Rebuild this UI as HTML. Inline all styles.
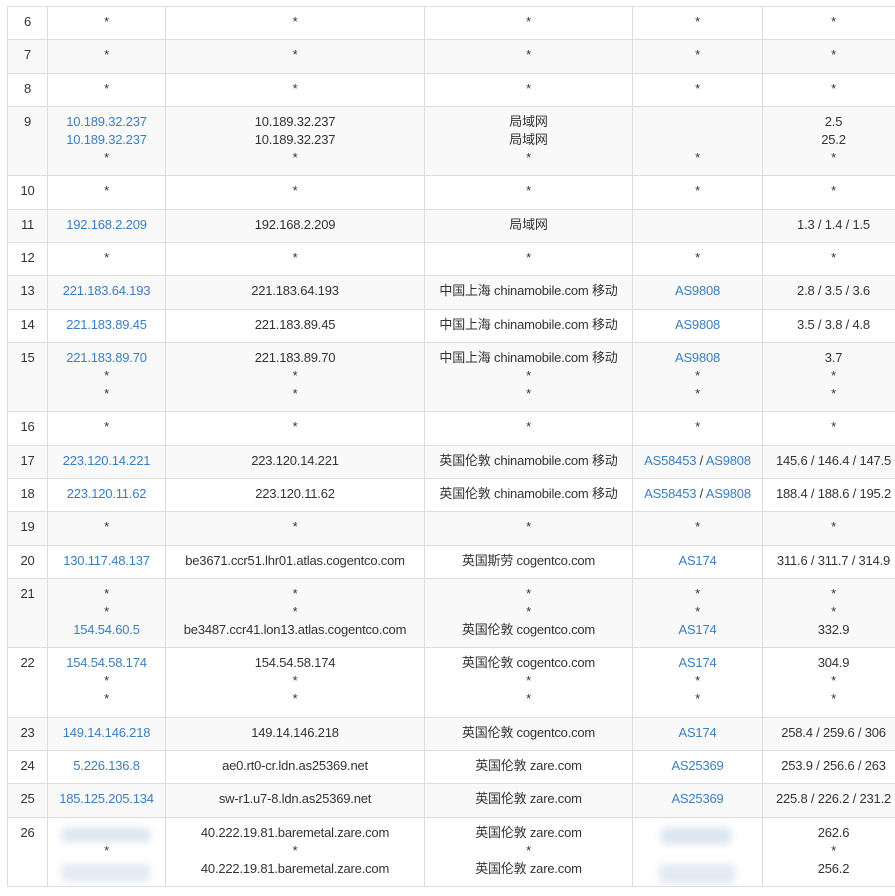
<!DOCTYPE html>
<html><head><meta charset="utf-8"><style>
body{margin:0;background:#fff;overflow:hidden;width:895px;height:896px}
table{position:absolute;left:7px;top:6px;border-collapse:collapse;table-layout:fixed;width:897px;font-family:"Liberation Sans","Noto Sans CJK SC",sans-serif;font-size:13px;letter-spacing:-0.2px;color:#333}
td{border:1px solid #ddd;text-align:center;vertical-align:top;line-height:18px;padding:6px 0 8.33px;white-space:nowrap;overflow:hidden}
tr:nth-child(even) td{background:#f9f9f9}
a{color:#3a7ec2;text-decoration:none}
.b{position:relative}
.bl{position:absolute;background:#dbe5f1;filter:blur(4px)}
</style></head><body>
<table>
<colgroup><col style="width:40px"><col style="width:118px"><col style="width:259px"><col style="width:208px"><col style="width:130px"><col style="width:142px"></colgroup>
<tr><td>6</td><td>*</td><td>*</td><td>*</td><td>*</td><td>*</td></tr>
<tr><td>7</td><td>*</td><td>*</td><td>*</td><td>*</td><td>*</td></tr>
<tr><td>8</td><td>*</td><td>*</td><td>*</td><td>*</td><td>*</td></tr>
<tr><td>9</td><td><a>10.189.32.237</a><br><a>10.189.32.237</a><br>*</td><td>10.189.32.237<br>10.189.32.237<br>*</td><td>局域网<br>局域网<br>*</td><td><br><br>*</td><td>2.5<br>25.2<br>*</td></tr>
<tr><td>10</td><td>*</td><td>*</td><td>*</td><td>*</td><td>*</td></tr>
<tr><td>11</td><td><a>192.168.2.209</a></td><td>192.168.2.209</td><td>局域网</td><td></td><td>1.3 / 1.4 / 1.5</td></tr>
<tr><td>12</td><td>*</td><td>*</td><td>*</td><td>*</td><td>*</td></tr>
<tr><td>13</td><td><a>221.183.64.193</a></td><td>221.183.64.193</td><td>中国上海 chinamobile.com 移动</td><td><a>AS9808</a></td><td>2.8 / 3.5 / 3.6</td></tr>
<tr><td>14</td><td><a>221.183.89.45</a></td><td>221.183.89.45</td><td>中国上海 chinamobile.com 移动</td><td><a>AS9808</a></td><td>3.5 / 3.8 / 4.8</td></tr>
<tr><td>15</td><td><a>221.183.89.70</a><br>*<br>*</td><td>221.183.89.70<br>*<br>*</td><td>中国上海 chinamobile.com 移动<br>*<br>*</td><td><a>AS9808</a><br>*<br>*</td><td>3.7<br>*<br>*</td></tr>
<tr><td>16</td><td>*</td><td>*</td><td>*</td><td>*</td><td>*</td></tr>
<tr><td>17</td><td><a>223.120.14.221</a></td><td>223.120.14.221</td><td>英国伦敦 chinamobile.com 移动</td><td><a>AS58453</a> / <a>AS9808</a></td><td>145.6 / 146.4 / 147.5</td></tr>
<tr><td>18</td><td><a>223.120.11.62</a></td><td>223.120.11.62</td><td>英国伦敦 chinamobile.com 移动</td><td><a>AS58453</a> / <a>AS9808</a></td><td>188.4 / 188.6 / 195.2</td></tr>
<tr><td>19</td><td>*</td><td>*</td><td>*</td><td>*</td><td>*</td></tr>
<tr><td>20</td><td><a>130.117.48.137</a></td><td>be3671.ccr51.lhr01.atlas.cogentco.com</td><td>英国斯劳 cogentco.com</td><td><a>AS174</a></td><td>311.6 / 311.7 / 314.9</td></tr>
<tr><td>21</td><td>*<br>*<br><a>154.54.60.5</a></td><td>*<br>*<br>be3487.ccr41.lon13.atlas.cogentco.com</td><td>*<br>*<br>英国伦敦 cogentco.com</td><td>*<br>*<br><a>AS174</a></td><td>*<br>*<br>332.9</td></tr>
<tr><td>22</td><td><a>154.54.58.174</a><br>*<br>*</td><td>154.54.58.174<br>*<br>*</td><td>英国伦敦 cogentco.com<br>*<br>*</td><td><a>AS174</a><br>*<br>*</td><td>304.9<br>*<br>*</td></tr>
<tr><td>23</td><td><a>149.14.146.218</a></td><td>149.14.146.218</td><td>英国伦敦 cogentco.com</td><td><a>AS174</a></td><td>258.4 / 259.6 / 306</td></tr>
<tr><td>24</td><td><a>5.226.136.8</a></td><td>ae0.rt0-cr.ldn.as25369.net</td><td>英国伦敦 zare.com</td><td><a>AS25369</a></td><td>253.9 / 256.6 / 263</td></tr>
<tr><td>25</td><td><a>185.125.205.134</a></td><td>sw-r1.u7-8.ldn.as25369.net</td><td>英国伦敦 zare.com</td><td><a>AS25369</a></td><td>225.8 / 226.2 / 231.2</td></tr>
<tr><td>26</td><td class="b"><span class="bl" style="left:14px;top:10px;width:88px;height:14px"></span><span class="bl" style="left:14px;top:46px;width:88px;height:18px;background:#e3eaf3"></span><br>*<br>&nbsp;</td><td>40.222.19.81.baremetal.zare.com<br>*<br>40.222.19.81.baremetal.zare.com</td><td>英国伦敦 zare.com<br>*<br>英国伦敦 zare.com</td><td class="b"><span class="bl" style="left:28px;top:10px;width:70px;height:16px"></span><span class="bl" style="left:26px;top:46px;width:76px;height:20px;background:#e3eaf3"></span><br><br>&nbsp;</td><td>262.6<br>*<br>256.2</td></tr>
</table>
</body></html>
